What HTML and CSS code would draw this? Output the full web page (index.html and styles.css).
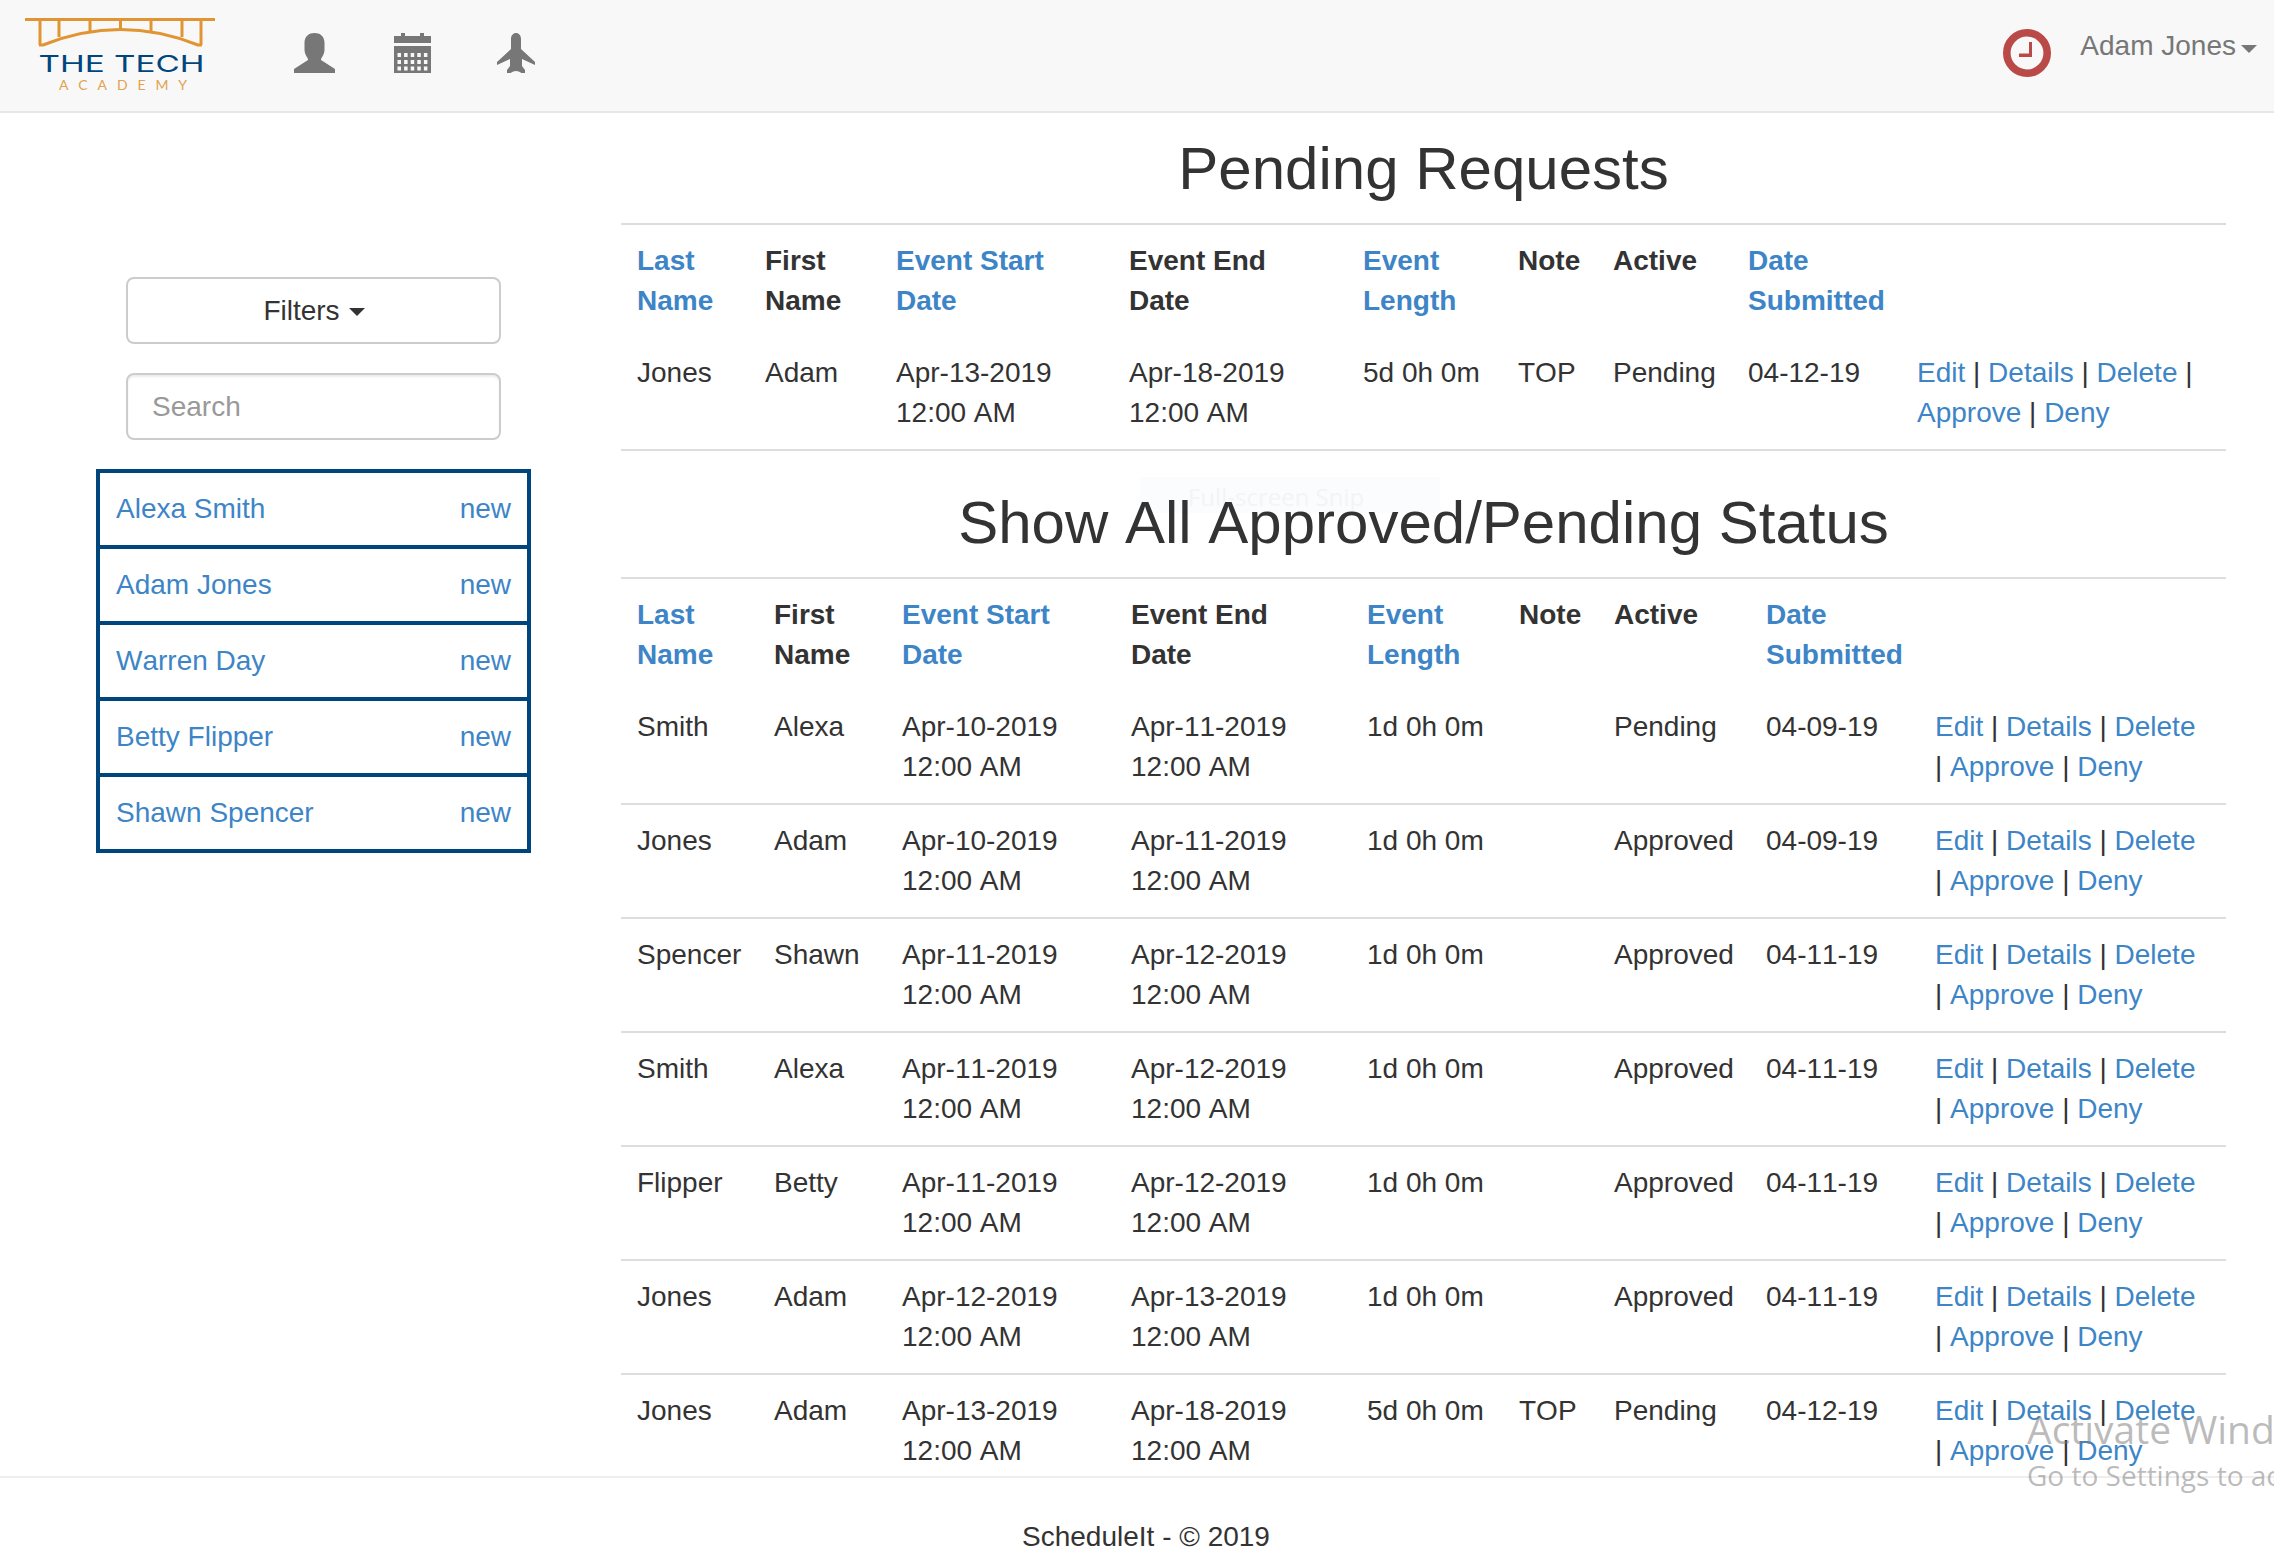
FILE: index.html
```html
<!DOCTYPE html>
<html lang="en">
<head>
<meta charset="utf-8">
<title>ScheduleIt</title>
<link rel="stylesheet" href="styles.css">
</head>
<body>
<div class="app">
  <nav class="navbar">
    <a class="logo" href="#">
      <svg class="logo-svg" viewBox="0 0 190 74" width="190" height="74">
        <path class="logo-line" d="M0 2.5H190M15 2.5V28M34 2.5V20M65 2.5V14.5M95.500 2.500V12M126 2.500V14.500M157 2.500V20M176 2.500V28"/>
        <path class="logo-line" d="M14 28H18Q95.500 -3 173 28H177"/>
        <text class="logo-title" x="13.500" y="55" textLength="166" lengthAdjust="spacingAndGlyphs">THE TECH</text>
        <text class="logo-sub" x="34" y="73" textLength="128" lengthAdjust="spacing">ACADEMY</text>
      </svg>
    </a>
    <a class="nav-icon nav-user" href="#">
      <svg viewBox="0 0 41 40" width="41" height="40"><path d="M20.500 0C26 0 30.500 3 30.500 10V17C30.500 21 28 24 27 26V27L41 36V40H0V36L14 27V26C13 24 10.500 21 10.500 17V10C10.500 3 15 0 20.500 0Z"/></svg>
    </a>
    <a class="nav-icon nav-cal" href="#">
      <svg viewBox="0 0 37 40" width="37" height="40"><path d="M7 0H11V3H26V0H30V3H37V10H0V3H7ZM0 13H37V40H0Z"/><path class="cal-cells" d="M3.500 22H34M3.500 29H34M3.500 35.500H34"/></svg>
    </a>
    <a class="nav-icon nav-plane" href="#">
      <svg viewBox="0 0 38 40" width="38" height="40"><path d="M19 0C21.800 0 24 2.500 24 6V16L38 29V32L25 26V33L28 37V40H24.500Q19 36 13.500 40H10V37L13 33V26L0 32V29L14 16V6C14 2.500 16.200 0 19 0Z"/></svg>
    </a>
    <a class="clock" href="#">
      <svg viewBox="0 0 48 48" width="48" height="48"><circle cx="24" cy="24" r="20.200" fill="none" stroke="#b94a48" stroke-width="7.600"/><path d="M26 13H29V28H16V24.500H26Z" fill="#b94a48"/></svg>
    </a>
    <a class="user-menu" href="#">Adam Jones<span class="caret caret-nav"></span></a>
  </nav>

  <div class="content">
    <aside class="sidebar">
      <div class="sidebar-controls">
        <button class="filter-btn" type="button">Filters<span class="caret caret-btn"></span></button>
        <input class="search" type="text" placeholder="Search">
      </div>
      <ul class="people">
        <li><a href="#"><span>Alexa Smith</span><span>new</span></a></li>
        <li><a href="#"><span>Adam Jones</span><span>new</span></a></li>
        <li><a href="#"><span>Warren Day</span><span>new</span></a></li>
        <li><a href="#"><span>Betty Flipper</span><span>new</span></a></li>
        <li><a href="#"><span>Shawn Spencer</span><span>new</span></a></li>
      </ul>
    </aside>

    <main class="main">
      <h2 class="title title-first">Pending Requests</h2>
      <table class="grid grid-pending">
        <colgroup><col><col><col><col><col><col><col><col><col></colgroup>
        <thead>
          <tr>
            <th><a href="#">Last Name</a></th><th>First Name</th><th><a href="#">Event Start Date</a></th><th>Event End Date</th><th><a href="#">Event Length</a></th><th>Note</th><th>Active</th><th><a href="#">Date Submitted</a></th><th></th>
          </tr>
        </thead>
        <tbody>
          <tr><td>Jones</td><td>Adam</td><td>Apr-13-2019 12:00 AM</td><td>Apr-18-2019 12:00 AM</td><td>5d 0h 0m</td><td>TOP</td><td>Pending</td><td>04-12-19</td><td><a href="#">Edit</a> | <a href="#">Details</a> | <a href="#">Delete</a> | <a href="#">Approve</a> | <a href="#">Deny</a></td></tr>
        </tbody>
      </table>

      <h2 class="title title-second">Show All Approved/Pending Status</h2>
      <table class="grid grid-all">
        <colgroup><col><col><col><col><col><col><col><col><col></colgroup>
        <thead>
          <tr>
            <th><a href="#">Last Name</a></th><th>First Name</th><th><a href="#">Event Start Date</a></th><th>Event End Date</th><th><a href="#">Event Length</a></th><th>Note</th><th>Active</th><th><a href="#">Date Submitted</a></th><th></th>
          </tr>
        </thead>
        <tbody>
          <tr><td>Smith</td><td>Alexa</td><td>Apr-10-2019 12:00 AM</td><td>Apr-11-2019 12:00 AM</td><td>1d 0h 0m</td><td></td><td>Pending</td><td>04-09-19</td><td><a href="#">Edit</a> | <a href="#">Details</a> | <a href="#">Delete</a> | <a href="#">Approve</a> | <a href="#">Deny</a></td></tr>
          <tr><td>Jones</td><td>Adam</td><td>Apr-10-2019 12:00 AM</td><td>Apr-11-2019 12:00 AM</td><td>1d 0h 0m</td><td></td><td>Approved</td><td>04-09-19</td><td><a href="#">Edit</a> | <a href="#">Details</a> | <a href="#">Delete</a> | <a href="#">Approve</a> | <a href="#">Deny</a></td></tr>
          <tr><td>Spencer</td><td>Shawn</td><td>Apr-11-2019 12:00 AM</td><td>Apr-12-2019 12:00 AM</td><td>1d 0h 0m</td><td></td><td>Approved</td><td>04-11-19</td><td><a href="#">Edit</a> | <a href="#">Details</a> | <a href="#">Delete</a> | <a href="#">Approve</a> | <a href="#">Deny</a></td></tr>
          <tr><td>Smith</td><td>Alexa</td><td>Apr-11-2019 12:00 AM</td><td>Apr-12-2019 12:00 AM</td><td>1d 0h 0m</td><td></td><td>Approved</td><td>04-11-19</td><td><a href="#">Edit</a> | <a href="#">Details</a> | <a href="#">Delete</a> | <a href="#">Approve</a> | <a href="#">Deny</a></td></tr>
          <tr><td>Flipper</td><td>Betty</td><td>Apr-11-2019 12:00 AM</td><td>Apr-12-2019 12:00 AM</td><td>1d 0h 0m</td><td></td><td>Approved</td><td>04-11-19</td><td><a href="#">Edit</a> | <a href="#">Details</a> | <a href="#">Delete</a> | <a href="#">Approve</a> | <a href="#">Deny</a></td></tr>
          <tr><td>Jones</td><td>Adam</td><td>Apr-12-2019 12:00 AM</td><td>Apr-13-2019 12:00 AM</td><td>1d 0h 0m</td><td></td><td>Approved</td><td>04-11-19</td><td><a href="#">Edit</a> | <a href="#">Details</a> | <a href="#">Delete</a> | <a href="#">Approve</a> | <a href="#">Deny</a></td></tr>
          <tr><td>Jones</td><td>Adam</td><td>Apr-13-2019 12:00 AM</td><td>Apr-18-2019 12:00 AM</td><td>5d 0h 0m</td><td>TOP</td><td>Pending</td><td>04-12-19</td><td><a href="#">Edit</a> | <a href="#">Details</a> | <a href="#">Delete</a> | <a href="#">Approve</a> | <a href="#">Deny</a></td></tr>
        </tbody>
      </table>
    </main>
  </div>

  <footer class="footer">ScheduleIt - © 2019</footer>

  <div class="snip-ghost">Full-screen Snip</div>
  <div class="watermark">
    <div class="watermark-big">Activate Windows</div>
    <div class="watermark-small">Go to Settings to activate Windows.</div>
  </div>
</div>
</body>
</html>
```

FILE: styles.css
```css
* { box-sizing: border-box; }
html, body { margin: 0; padding: 0; height: 100%; overflow: hidden; }
body {
  font-family: "Liberation Sans", Arial, sans-serif;
  font-size: 28px;
  line-height: 40px;
  font-kerning: none;
  color: #333;
  background: #fff;
}
a { color: #3d85c6; text-decoration: none; }

.app {
  position: relative;
  height: 1566px;
  width: 2274px;
  overflow: hidden;
  display: flex;
  flex-direction: column;
}

/* Navbar */
.navbar {
  flex: none;
  height: 113px;
  display: flex;
  align-items: flex-start;
  background: #f8f8f8;
  border-bottom: 2px solid #e7e7e7;
  padding-left: 25px;
  padding-right: 17px;
}
.logo { display: block; margin-top: 17px; line-height: 0; }
.logo-svg { display: block; overflow: visible; }
.logo-line { fill: none; stroke: #e09432; stroke-width: 3; }
.logo-title { font-family: Inter, sans-serif; font-size: 23px; fill: #00457c; }
.logo-sub { font-family: Lato, sans-serif; font-size: 14px; fill: #e2a24f; }
.nav-icon { display: block; margin-top: 33px; line-height: 0; }
.nav-icon svg { display: block; fill: #777; }
.cal-cells { fill: none; stroke: #f8f8f8; stroke-width: 4; stroke-dasharray: 3.5 3.1; }
.nav-user { margin-left: 79px; }
.nav-cal { margin-left: 59px; }
.nav-plane { margin-left: 66px; }
.clock { display: block; margin-left: auto; margin-top: 29px; line-height: 0; }
.user-menu { display: flex; align-items: center; margin-left: 29px; margin-top: 26px; color: #777; }
.caret { display: inline-block; width: 0; height: 0; border-left: 8px solid transparent; border-right: 8px solid transparent; }
.caret-nav { border-top: 8px solid #777; margin-left: 5px; margin-top: 6px; }
.caret-btn { border-top: 8px solid #333; margin-left: 9px; vertical-align: middle; }

/* Content */
.content {
  flex: 1;
  min-height: 0;
  overflow: hidden;
  display: flex;
  align-items: flex-start;
  padding-left: 96px;
}
.sidebar { flex: none; width: 435px; margin-top: 164px; }
.sidebar-controls { display: flex; flex-direction: column; gap: 29px; padding: 0 30px; margin-bottom: 29px; }
.filter-btn {
  height: 67px;
  font: inherit;
  font-kerning: none;
  color: #333;
  background: #fff;
  border: 2px solid #ccc;
  border-radius: 8px;
  padding: 0 0 0 1px;
}
.search {
  height: 67px;
  font: inherit;
  color: #555;
  background: #fff;
  border: 2px solid #ccc;
  border-radius: 8px;
  padding: 0 24px;
  box-shadow: inset 0 2px 2px rgba(0, 0, 0, .075);
}
.search::placeholder { color: #999; opacity: 1; }
.people { list-style: none; margin: 0; padding: 0; border: 4px solid #00457c; }
.people li + li { border-top: 4px solid #00457c; }
.people a { display: flex; justify-content: space-between; padding: 16px; }

.main { flex: none; width: 1605px; margin-left: 90px; }
.title { font-size: 60px; line-height: 66px; font-weight: 400; text-align: center; margin: 0; }
.title-first { margin-top: 23px; margin-bottom: 21px; }
.title-second { margin-top: 39px; margin-bottom: 21px; }

/* Tables */
.grid {
  width: 100%;
  table-layout: fixed;
  border-collapse: separate;
  border-spacing: 0;
  border-top: 2px solid #ddd;
}
.grid th, .grid td { padding: 16px; text-align: left; vertical-align: top; }
.grid th { font-weight: 700; }
.grid td { border-bottom: 2px solid #ddd; }

.grid-pending col:nth-child(1) { width: 128px; }
.grid-pending col:nth-child(2) { width: 131px; }
.grid-pending col:nth-child(3) { width: 233px; }
.grid-pending col:nth-child(4) { width: 234px; }
.grid-pending col:nth-child(5) { width: 155px; }
.grid-pending col:nth-child(6) { width: 95px; }
.grid-pending col:nth-child(7) { width: 135px; }
.grid-pending col:nth-child(8) { width: 169px; }
.grid-pending col:nth-child(9) { width: 325px; }

.grid-all col:nth-child(1) { width: 137px; }
.grid-all col:nth-child(2) { width: 128px; }
.grid-all col:nth-child(3) { width: 229px; }
.grid-all col:nth-child(4) { width: 236px; }
.grid-all col:nth-child(5) { width: 152px; }
.grid-all col:nth-child(6) { width: 95px; }
.grid-all col:nth-child(7) { width: 152px; }
.grid-all col:nth-child(8) { width: 169px; }
.grid-all col:nth-child(9) { width: 307px; }

/* Footer */
.footer {
  flex: none;
  height: 90px;
  border-top: 2px solid #eee;
  padding-top: 39px;
  padding-left: 18px;
  text-align: center;
  background: #fff;
}

/* Screen overlays captured in the shot */
.snip-ghost {
  position: absolute;
  left: 1140px;
  top: 477px;
  width: 300px;
  height: 36px;
  padding-left: 48px;
  background: #fbfcfe;
  color: #f3f4f6;
  font-family: "Open Sans", sans-serif;
  font-size: 24px;
  line-height: 40px;
  z-index: -1;
}
.watermark {
  position: absolute;
  left: 2027px;
  top: 1403px;
  white-space: nowrap;
  font-family: "Open Sans", sans-serif;
  color: rgba(120, 120, 120, .5);
}
.watermark-big { font-size: 39px; line-height: 52px; }
.watermark-small { font-size: 28px; line-height: 40px; }
```
